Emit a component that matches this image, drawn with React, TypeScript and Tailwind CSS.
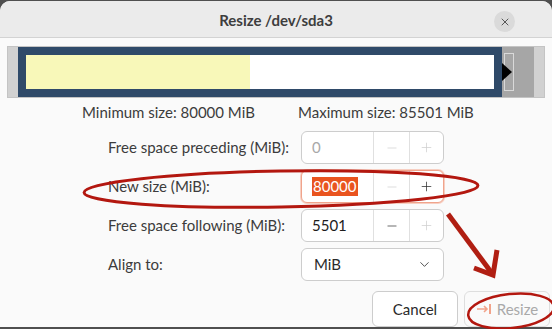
import { ChevronDown, Minus, Plus, X } from 'lucide-react';

function SpinButton({
  value,
  disabled,
  focused,
  minusOff,
  plusOff,
}: {
  value: string;
  disabled?: boolean;
  focused?: boolean;
  minusOff?: boolean;
  plusOff?: boolean;
}) {
  return (
    <div
      className={`flex h-[33px] w-[143px] rounded-[6px] border bg-white ${
        focused ? 'border-[#f0a48c] shadow-[0_0_0_1px_#f7cfc2]' : 'border-[#cdcdcd]'
      }`}
    >
      <div className="flex flex-1 items-center pl-[10px]">
        {focused ? (
          <span className="bg-[#e9541f] px-px leading-[19px] text-white">{value}</span>
        ) : (
          <span className={disabled ? 'text-[#a8a8a8]' : 'text-[#1c1c1c]'}>{value}</span>
        )}
      </div>
      <div className="flex w-[36px] items-center justify-center border-l border-[#e0e0e0]">
        <Minus size={14} strokeWidth={1.2} className={minusOff ? 'text-[#cfcfcf]' : 'text-[#2e2e2e]'} />
      </div>
      <div className="flex w-[34px] items-center justify-center border-l border-[#e0e0e0]">
        <Plus size={15} strokeWidth={1.2} className={plusOff ? 'text-[#cfcfcf]' : 'text-[#2e2e2e]'} />
      </div>
    </div>
  );
}

export default function App() {
  return (
    <div className="relative h-[329px] w-[552px] overflow-hidden bg-[#4f4f4f] font-['Lato','Noto_Sans',sans-serif] text-[15px] text-[#3c3c3c]">
      <div className="mt-px flex h-[326px] flex-col rounded-t-[10px] bg-[#fafafa]">
        {/* Header */}
        <div className="relative flex h-[37px] shrink-0 items-center justify-center rounded-t-[10px] border-b border-[#d3d3d3] bg-[#ebebeb]">
          <span className="pt-[2px] text-[15px] font-bold text-[#3d3d3d]">Resize /dev/sda3</span>
          <div className="absolute right-[37px] top-[10px] flex h-[21px] w-[21px] items-center justify-center rounded-full bg-[#dadada] text-[#333]">
            <X size={12} strokeWidth={1.6} />
          </div>
        </div>

        {/* Partition bar */}
        <div className="mx-[7px] mt-[8px] flex h-[52px] shrink-0 border border-[#c4c4c4] bg-[#d1d1d1] px-[10px]">
          <div className="flex w-[484px] bg-[#2f4a69] p-[8px]">
            <div className="w-[224px] bg-[#f8f8b9]" />
            <div className="flex-1 bg-white" />
          </div>
          <div className="relative flex-1 bg-[#a6a6a6]">
            <div className="absolute left-[2px] top-[6px] h-[38px] w-[10px] border border-[#d9d9d9]" />
            <svg className="absolute left-0 top-[16px]" width="11" height="18" viewBox="0 0 11 18">
              <path d="M0 0 L10 9 L0 18 Z" fill="#000" />
            </svg>
          </div>
        </div>

        {/* Min / max */}
        <div className="mt-[4px] flex h-[20px] items-center whitespace-nowrap">
          <span className="w-[298px] pl-[82px]">Minimum size: 80000 MiB</span>
          <span>Maximum size: 85501 MiB</span>
        </div>

        {/* Fields */}
        <div className="mt-[9px] flex flex-col gap-[6px] pl-[108px]">
          <div className="flex h-[33px] items-center">
            <span className="w-[193px]">Free space preceding (MiB):</span>
            <SpinButton value="0" disabled minusOff plusOff />
          </div>
          <div className="flex h-[33px] items-center">
            <span className="w-[193px]">New size (MiB):</span>
            <SpinButton value="80000" focused minusOff />
          </div>
          <div className="flex h-[33px] items-center">
            <span className="w-[193px]">Free space following (MiB):</span>
            <SpinButton value="5501" plusOff />
          </div>
          <div className="flex h-[33px] items-center">
            <span className="w-[193px]">Align to:</span>
            <div className="flex h-[33px] w-[143px] items-center justify-between rounded-[6px] border border-[#cdcdcd] bg-white pl-[12px] pr-[11px] text-[#2a2a2a]">
              <span>MiB</span>
              <ChevronDown size={15} strokeWidth={1.3} />
            </div>
          </div>
        </div>

        {/* Buttons */}
        <div className="mt-[10px] flex justify-end gap-[6px] pr-[2px]">
          <div className="flex h-[36px] w-[86px] items-center justify-center rounded-[6px] border border-[#cdcdcd] bg-white text-[#2a2a2a]">
            Cancel
          </div>
          <div className="flex h-[36px] w-[86px] items-center justify-center gap-[5px] rounded-[6px] border border-[#dedede] bg-[#fafafa] text-[#a9a9a9]">
            <svg width="16" height="12" viewBox="0 0 16 12">
              <path d="M1 6 H11 M8 3 L11 6 L8 9" stroke="#f2a38a" strokeWidth="1.6" fill="none" />
              <path d="M14 1 V11" stroke="#f2a38a" strokeWidth="2" />
            </svg>
            <span>Resize</span>
          </div>
        </div>
      </div>

      {/* Red annotations */}
      <svg className="pointer-events-none absolute left-0 top-0" width="552" height="329" viewBox="0 0 552 329">
        <ellipse cx="281" cy="189" rx="197" ry="18" transform="rotate(-1 281 189)" fill="none" stroke="#b3170f" strokeWidth="3" />
        <path d="M448 214 L491 272" stroke="#b01e12" strokeWidth="5" fill="none" />
        <path d="M474 268 L493 275 L497 250" stroke="#b01e12" strokeWidth="5" fill="none" strokeLinejoin="miter" />
        <ellipse cx="511" cy="311" rx="43" ry="17" transform="rotate(-6 511 311)" fill="none" stroke="#b3170f" strokeWidth="2.5" />
      </svg>
    </div>
  );
}
